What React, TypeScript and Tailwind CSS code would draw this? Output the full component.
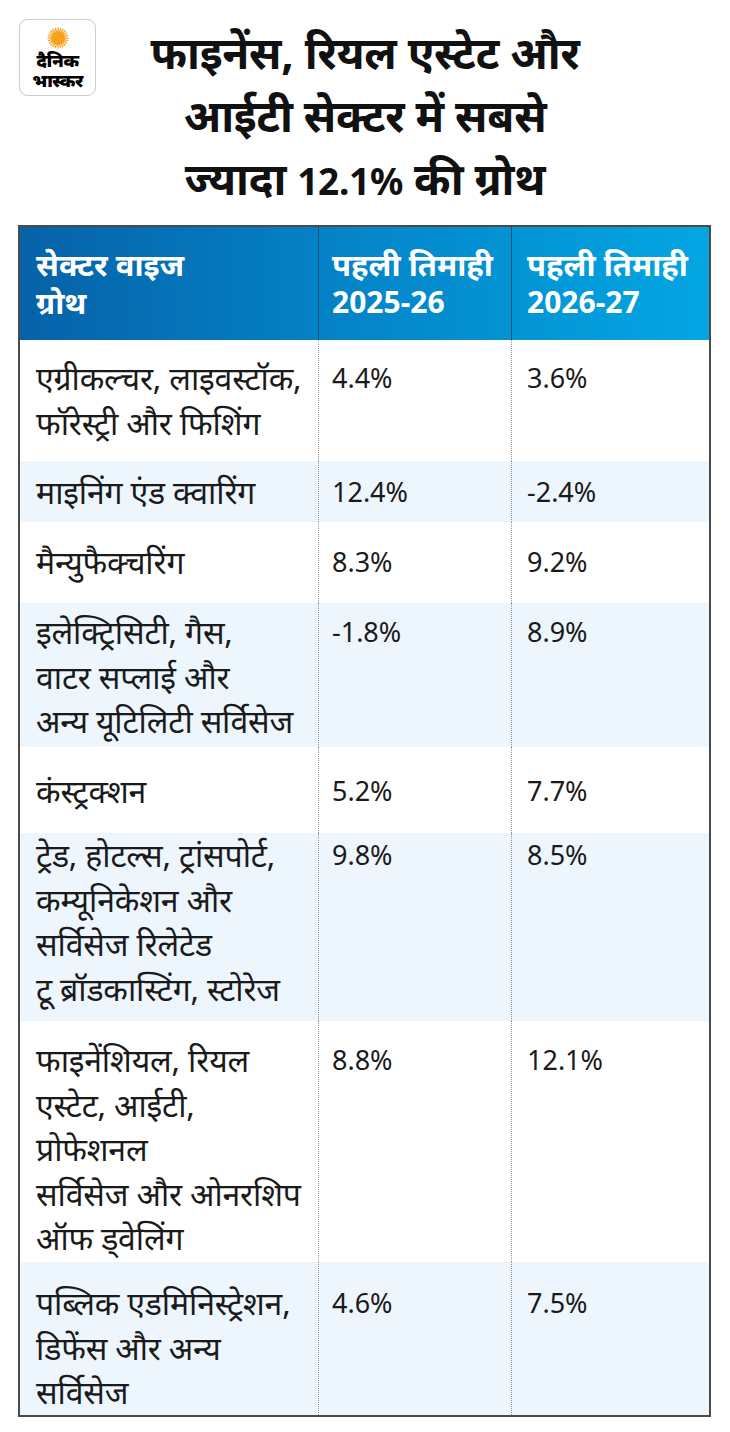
import React from "react";

type Row = { label: string[]; a: string; b: string; h: number; pt: number; blue: boolean };

const rows: Row[] = [
  { label: ["एग्रीकल्चर, लाइवस्टॉक,", "फॉरेस्ट्री और फिशिंग"], a: "4.4%", b: "3.6%", h: 121, pt: 16, blue: false },
  { label: ["माइनिंग एंड क्वारिंग"], a: "12.4%", b: "-2.4%", h: 61, pt: 9, blue: true },
  { label: ["मैन्युफैक्चरिंग"], a: "8.3%", b: "9.2%", h: 81, pt: 18, blue: false },
  { label: ["इलेक्ट्रिसिटी, गैस,", "वाटर सप्लाई और", "अन्य यूटिलिटी सर्विसेज"], a: "-1.8%", b: "8.9%", h: 144, pt: 7, blue: true },
  { label: ["कंस्ट्रक्शन"], a: "5.2%", b: "7.7%", h: 86, pt: 22, blue: false },
  { label: ["ट्रेड, होटल्स, ट्रांसपोर्ट,", "कम्यूनिकेशन और", "सर्विसेज रिलेटेड", "टू ब्रॉडकास्टिंग, स्टोरेज"], a: "9.8%", b: "8.5%", h: 188, pt: 0, blue: true },
  { label: ["फाइनेंशियल, रियल", "एस्टेट, आईटी,", "प्रोफेशनल", "सर्विसेज और ओनरशिप", "ऑफ ड्वेलिंग"], a: "8.8%", b: "12.1%", h: 241, pt: 17, blue: false },
  { label: ["पब्लिक एडमिनिस्ट्रेशन,", "डिफेंस और अन्य", "सर्विसेज"], a: "4.6%", b: "7.5%", h: 153, pt: 19, blue: true },
];

function Sun() {
  const rays = Array.from({ length: 24 }, (_, i) => i * 15);
  return (
    <svg width="22" height="22" viewBox="-11 -11 22 22">
      {rays.map((d) => (
        <line
          key={d}
          x1="0"
          y1="-6"
          x2="0"
          y2="-10.5"
          stroke="#f7a21b"
          strokeWidth="1.3"
          transform={`rotate(${d})`}
        />
      ))}
      <circle cx="0" cy="0" r="6.8" fill="#f7a21b" />
    </svg>
  );
}

function Logo() {
  return (
    <div className="w-[77px] h-[77px] rounded-[9px] border border-[#cfcfcf] bg-white flex flex-col items-center pt-[7px] shadow-[0_0_1px_rgba(0,0,0,0.15)]">
      <Sun />
      <div className="text-[18px] font-black leading-[20px] text-black tracking-[-0.5px] mt-[1px]">दैनिक</div>
      <div className="text-[18px] font-black leading-[20px] text-black tracking-[-0.5px]">भास्कर</div>
    </div>
  );
}

export default function App() {
  return (
    <div
      className="w-[730px] h-[1432px] bg-white text-[#1a1a1a]"
      style={{ fontFamily: "'Noto Sans', 'Noto Sans Devanagari', 'Lohit Devanagari', sans-serif" }}
    >
      <div className="flex pt-[19px] px-[19px] h-[210px]">
        <div className="w-[78px] shrink-0">
          <Logo />
        </div>
        <div className="flex-1 text-center text-[44px] font-bold leading-[63px] pt-[2px] text-[#111] tracking-[-0.3px]">
          <div className="h-[63px]">फाइनेंस, रियल एस्टेट और</div>
          <div className="h-[63px]">आईटी सेक्टर में सबसे</div>
          <div className="h-[63px]">
            ज्यादा <span className="text-[37px] leading-[0]">12.1%</span> की ग्रोथ
          </div>
        </div>
        <div className="w-[78px] shrink-0" />
      </div>

      <div className="mx-[18px] mt-[15px] border-2 border-[#4a4a4a] w-[693px]">
        <div className="flex h-[113px] bg-gradient-to-r from-[#0762a8] via-[#0486c9] to-[#04a6e2] text-white font-bold text-[31px] leading-[38px]">
          <div className="w-[299px] pl-[16px] pt-[18px] border-r border-[#1d4f7a]">
            <div>सेक्टर वाइज</div>
            <div>ग्रोथ</div>
          </div>
          <div className="w-[193px] pl-[13px] pt-[18px] border-r border-[#1d4f7a]">
            <div>पहली तिमाही</div>
            <div className="text-[30px]">2025-26</div>
          </div>
          <div className="flex-1 pl-[15px] pt-[18px]">
            <div>पहली तिमाही</div>
            <div className="text-[30px]">2026-27</div>
          </div>
        </div>
        {rows.map((r, i) => (
          <div
            key={i}
            className={`flex leading-[44.5px] ${r.blue ? "bg-[#edf5fd]" : "bg-white"}`}
            style={{ height: r.h }}
          >
            <div
              className="w-[299px] pl-[16px] text-[32px] tracking-[-0.2px] border-r border-dotted border-[#9a9a9a]"
              style={{ paddingTop: r.pt }}
            >
              {r.label.map((l, j) => (
                <div key={j} className="whitespace-nowrap">{l}</div>
              ))}
            </div>
            <div
              className="w-[193px] pl-[13px] text-[27px] border-r border-dotted border-[#9a9a9a]"
              style={{ paddingTop: r.pt }}
            >
              {r.a}
            </div>
            <div className="flex-1 pl-[15px] text-[27px]" style={{ paddingTop: r.pt }}>
              {r.b}
            </div>
          </div>
        ))}
      </div>
    </div>
  );
}
